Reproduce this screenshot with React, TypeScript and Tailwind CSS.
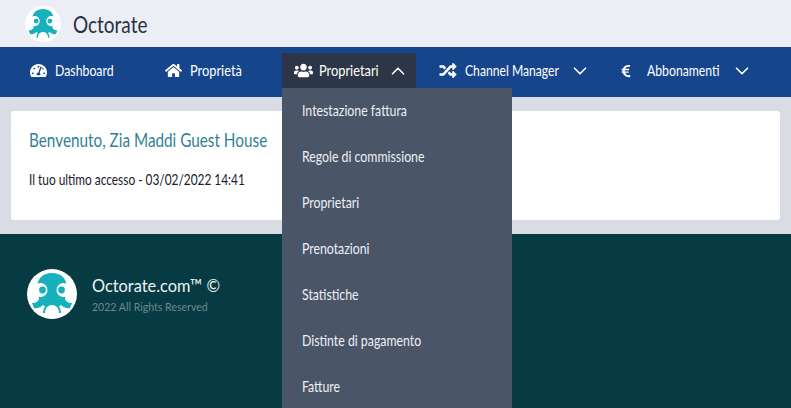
import React from "react";
import { FaTachometerAlt, FaHome, FaUsers, FaRandom, FaEuroSign } from "react-icons/fa";
import { ChevronDown, ChevronUp } from "lucide-react";

function Logo({ size }: { size: number }) {
  return (
    <svg width={size} height={size} viewBox="0 0 50 50" className="shrink-0">
      <circle cx="25" cy="25" r="25" fill="#ffffff" />
      <path
        d="M25 4C16 4 11 9 10.5 16L12 30c-1 3-4 4-7 4l2 5c3 1 7-1 9-3 1 1 2 1 2 1-1 2-2 4-2 7h18c0-3-1-5-2-7 0 0 1 0 2-1 2 2 6 4 9 3l2-5c-3 0-6-1-7-4l1.5-14C39 9 34 4 25 4z"
        fill="#17b1bd"
      />
      <circle cx="25" cy="43" r="7" fill="#ffffff" />
      <circle cx="13.5" cy="21" r="7" fill="#ffffff" />
      <circle cx="36.5" cy="21" r="7" fill="#ffffff" />
      <circle cx="15.5" cy="21" r="3.4" fill="#17b1bd" />
      <circle cx="34.5" cy="21" r="3.4" fill="#17b1bd" />
    </svg>
  );
}

const menu = [
  "Intestazione fattura",
  "Regole di commissione",
  "Proprietari",
  "Prenotazioni",
  "Statistiche",
  "Distinte di pagamento",
  "Fatture",
];

export default function App() {
  return (
    <div className="w-[791px] h-[408px] overflow-hidden bg-[#d9dce3] flex flex-col font-['Lato',sans-serif] relative">
      <header className="h-[47px] bg-[#ebeef4] flex items-center pl-[25px] gap-[12px] shrink-0">
        <Logo size={36} />
        <span className="inline-block w-[74px] origin-left scale-x-[0.79] text-[24px] text-[#273043] leading-none whitespace-nowrap">Octorate</span>
      </header>

      <nav className="h-[50px] bg-[#16458b] flex items-start pt-[6px] text-white text-[15px] shrink-0 whitespace-nowrap">
        <div className="h-[35px] w-[141px] pl-[30px] flex items-center gap-[8px]">
          <FaTachometerAlt className="text-[17px] w-[17px] shrink-0" />
          <span className="inline-block w-[58px] origin-left scale-x-[0.82]">Dashboard</span>
        </div>
        <div className="h-[35px] w-[141px] pl-[24px] flex items-center gap-[8px]">
          <FaHome className="text-[17px] w-[17px] shrink-0" />
          <span className="inline-block w-[51px] origin-left scale-x-[0.855]">Proprietà</span>
        </div>
        <div className="h-[35px] w-[134px] pl-[12px] flex items-center gap-[6px] bg-[#2d3646]">
          <FaUsers className="text-[19px] w-[19px] shrink-0" />
          <span className="inline-block w-[59px] origin-left scale-x-[0.855]">Proprietari</span>
          <ChevronUp size={22} strokeWidth={1.8} className="ml-[3px] shrink-0" />
        </div>
        <div className="h-[35px] w-[174px] pl-[23px] flex items-center gap-[8px]">
          <FaRandom className="text-[17px] w-[18px] shrink-0" />
          <span className="inline-block w-[93px] origin-left scale-x-[0.81]">Channel Manager</span>
          <ChevronDown size={22} strokeWidth={1.8} className="ml-[3px] shrink-0" />
        </div>
        <div className="h-[35px] flex-1 pl-[30px] flex items-center gap-[15px]">
          <FaEuroSign className="text-[14px] w-[12px] shrink-0" />
          <span className="inline-block w-[72px] origin-left scale-x-[0.815]">Abbonamenti</span>
          <ChevronDown size={22} strokeWidth={1.8} className="ml-[-3px] shrink-0" />
        </div>
      </nav>

      <main className="h-[137px] px-[11px] pt-[14px] shrink-0">
        <div className="h-[109px] bg-white rounded-[3px] pl-[18px] pt-[17px]">
          <h2 className="origin-left scale-x-[0.805] text-[19px] leading-[24px] text-[#2f8296] whitespace-nowrap">Benvenuto, Zia Maddi Guest House</h2>
          <p className="mt-[17px] origin-left scale-x-[0.79] text-[15px] leading-[20px] text-[#1a202c] whitespace-nowrap">Il tuo ultimo accesso - 03/02/2022 14:41</p>
        </div>
      </main>

      <footer className="flex-1 bg-[#063b43] flex items-start pl-[27px] pt-[35px] gap-[15px]">
        <Logo size={50} />
        <div className="pt-[4px]">
          <div className="origin-left scale-x-[0.908] text-[18px] leading-[24px] text-[#eef2f5] whitespace-nowrap">Octorate.com™ ©</div>
          <div className="origin-left scale-x-[0.96] text-[11px] leading-[16px] mt-[2px] text-[#6f878e] whitespace-nowrap">2022 All Rights Reserved</div>
        </div>
      </footer>

      <ul className="absolute left-[282px] top-[88px] w-[230px] h-[320px] bg-[#4a5568] text-[15px] text-[#edf0f4]">
        {menu.map((m) => (
          <li key={m} className="h-[46px] pl-[20px] pb-[2px] flex items-center">
            <span className="inline-block origin-left scale-x-[0.82] whitespace-nowrap">{m}</span>
          </li>
        ))}
      </ul>
    </div>
  );
}
